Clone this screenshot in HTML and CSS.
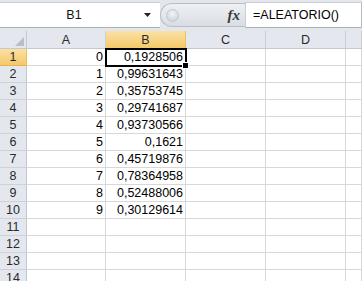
FILE: index.html
```html
<!DOCTYPE html>
<html lang="es">
<head>
  <meta charset="UTF-8">
  <title>ALEATORIO</title>
  <link rel="stylesheet" href="styles.css">
</head>
<body>
  <div class="formula-bar">
    <div class="name-box">
      <span class="name">B1</span>
      <svg class="drop" width="7" height="4" viewBox="0 0 7 4"><path d="M0 0h7L3.5 4z" fill="#222"/></svg>
    </div>
    <div class="pill">
      <span class="knob"></span>
      <span class="fx">fx</span>
    </div>
    <div class="formula">=ALEATORIO()</div>
  </div>

  <div class="sheet">
    <div class="corner"><svg width="9" height="9" viewBox="0 0 9 9"><path d="M9 0v9H0z" fill="#b9bec6"/></svg></div>
    <div class="col-head">A</div>
    <div class="col-head active">B</div>
    <div class="col-head">C</div>
    <div class="col-head">D</div>
    <div class="col-head"></div>

    <div class="row-head active">1</div><div class="cell num">0</div><div class="cell num sel">0,1928506</div><div class="cell"></div><div class="cell"></div><div class="cell"></div>
    <div class="row-head">2</div><div class="cell num">1</div><div class="cell num">0,99631643</div><div class="cell"></div><div class="cell"></div><div class="cell"></div>
    <div class="row-head">3</div><div class="cell num">2</div><div class="cell num">0,35753745</div><div class="cell"></div><div class="cell"></div><div class="cell"></div>
    <div class="row-head">4</div><div class="cell num">3</div><div class="cell num">0,29741687</div><div class="cell"></div><div class="cell"></div><div class="cell"></div>
    <div class="row-head">5</div><div class="cell num">4</div><div class="cell num">0,93730566</div><div class="cell"></div><div class="cell"></div><div class="cell"></div>
    <div class="row-head">6</div><div class="cell num">5</div><div class="cell num">0,1621</div><div class="cell"></div><div class="cell"></div><div class="cell"></div>
    <div class="row-head">7</div><div class="cell num">6</div><div class="cell num">0,45719876</div><div class="cell"></div><div class="cell"></div><div class="cell"></div>
    <div class="row-head">8</div><div class="cell num">7</div><div class="cell num">0,78364958</div><div class="cell"></div><div class="cell"></div><div class="cell"></div>
    <div class="row-head">9</div><div class="cell num">8</div><div class="cell num">0,52488006</div><div class="cell"></div><div class="cell"></div><div class="cell"></div>
    <div class="row-head">10</div><div class="cell num">9</div><div class="cell num">0,30129614</div><div class="cell"></div><div class="cell"></div><div class="cell"></div>
    <div class="row-head">11</div><div class="cell"></div><div class="cell"></div><div class="cell"></div><div class="cell"></div><div class="cell"></div>
    <div class="row-head">12</div><div class="cell"></div><div class="cell"></div><div class="cell"></div><div class="cell"></div><div class="cell"></div>
    <div class="row-head">13</div><div class="cell"></div><div class="cell"></div><div class="cell"></div><div class="cell"></div><div class="cell"></div>
    <div class="row-head">14</div><div class="cell"></div><div class="cell"></div><div class="cell"></div><div class="cell"></div><div class="cell"></div>
  </div>
</body>
</html>
```

FILE: styles.css
```css
html, body {
  margin: 0;
  height: 100%;
  overflow: hidden;
}

body {
  font-family: 'Liberation Sans', Arial, sans-serif;
  font-size: 12.5px;
  color: #000;
  background: #fff;
}

.formula-bar {
  display: flex;
  align-items: flex-start;
  height: 31px;
  padding-top: 2px;
  box-sizing: border-box;
  background: #e3e7ec;
}

.name-box {
  width: 160px;
  height: 26px;
  box-sizing: border-box;
  border-top: 1px solid #c9ced6;
  border-bottom: 1px solid #aab2bd;
  background: #fff;
  display: flex;
  align-items: center;
}

.name {
  flex: 1;
  text-align: center;
  padding-left: 4px;
  color: #111;
}

.drop {
  margin-right: 9px;
}

.pill {
  width: 85px;
  height: 24px;
  margin-top: 1px;
  box-sizing: border-box;
  border: 1px solid #b7bec8;
  border-right: none;
  border-radius: 12px 0 0 12px;
  background: linear-gradient(#eef0f3, #d9dde3);
  display: flex;
  align-items: center;
}

.knob {
  width: 11px;
  height: 11px;
  margin-left: 5px;
  border-radius: 50%;
  background: radial-gradient(circle at 50% 35%, #f4f5f7, #c6cbd2);
  border: 1px solid #c4c9d0;
}

.fx {
  margin-left: auto;
  margin-right: 5px;
  font-family: 'Liberation Serif', serif;
  font-style: italic;
  font-weight: bold;
  font-size: 15px;
  color: #3a3a3a;
}

.formula {
  flex: 1;
  height: 26px;
  box-sizing: border-box;
  border: 1px solid #c9ced6;
  border-bottom-color: #aab2bd;
  border-right-color: #b4bbc5;
  background: #fff;
  padding-left: 7px;
  line-height: 24px;
  font-size: 12.5px;
  color: #000;
}

.sheet {
  display: grid;
  grid-template-columns: 27px 79px 80px 80px 80px 1fr;
  grid-template-rows: 18px;
  grid-auto-rows: 17px;
}

.corner,
.col-head,
.row-head {
  background: #e4e8ee;
  border-right: 1px solid #c3c9d1;
  border-bottom: 1px solid #c3c9d1;
  color: #2a2a2a;
}

.corner {
  display: flex;
  align-items: flex-end;
  justify-content: flex-end;
  padding: 0 2px 2px 0;
}

.col-head {
  text-align: center;
  line-height: 18px;
  border-right-color: #c8ced6;
}

.row-head {
  text-align: center;
  line-height: 16px;
  border-bottom-color: #cdd2d9;
}

.active {
  background: linear-gradient(#fbe1a4, #f4c869);
  border-right-color: #f0bf57;
  border-bottom-color: #e9b24a;
}

.cell {
  border-right: 1px solid #d8d8d8;
  border-bottom: 1px solid #d8d8d8;
  line-height: 17px;
  white-space: nowrap;
  overflow: hidden;
}

.num {
  text-align: right;
  padding-right: 2px;
}

.sel {
  position: relative;
  overflow: visible;
  outline: 2px solid #000;
  outline-offset: -1px;
}

.sel::after {
  content: "";
  position: absolute;
  right: -4px;
  bottom: -4px;
  width: 5px;
  height: 5px;
  background: #000;
  border: 1px solid #fff;
}
```
